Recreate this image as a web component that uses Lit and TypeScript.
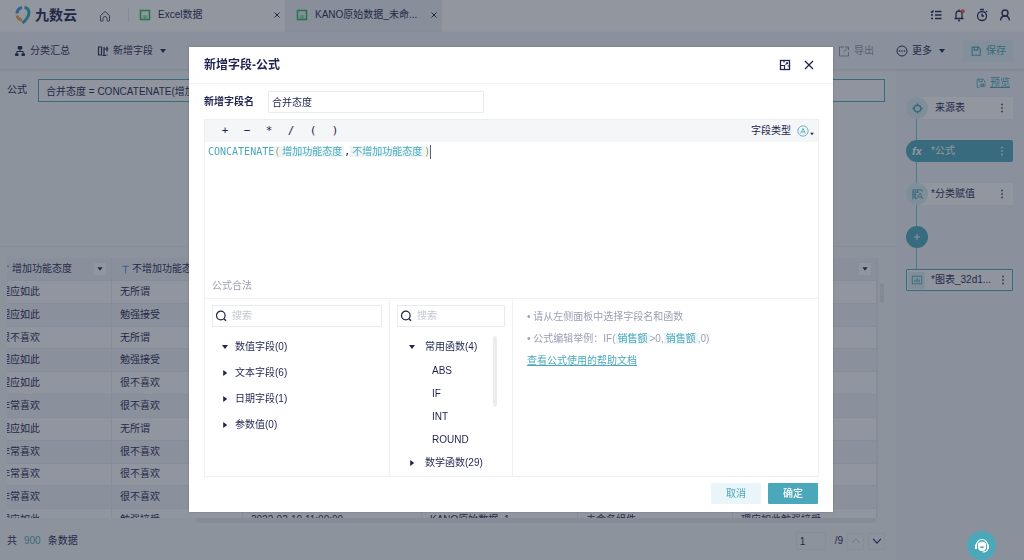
import { LitElement, html, css, svg, nothing } from "lit";
import { customElement, property, state } from "lit/decorators.js";
import { classMap } from "lit/directives/class-map.js";

const icons: Record<string, unknown> = {
  home: svg`<path d="M2.500 6.500 7 2.500l4.500 4v5.500H9V9.500a2 2 0 0 0-4 0V12H2.500z"/>`,
  sheet: svg`<rect x="2.500" y="2.500" width="9" height="9" stroke-width="1.600" stroke="#2fbf5b"/><path d="M4.500 8h5M4.500 9.800h5M7 7v4" stroke="#2fbf5b" stroke-width=".6"/>`,
  close: svg`<path d="m4.500 4.500 5 5m0-5-5 5"/>`,
  list: svg`<path d="m2 3.500 1 1 1.500-2M2 7h2M2 10.500h2M6 3.500h6.500M6 7h6.500M6 10.500h6.500" stroke-width="1.400"/>`,
  bell: svg`<path d="M2.500 10.500h9M4 10.500V6a3 3 0 0 1 6 0v4.500M6 12.500h2M7 1.500V3" stroke-width="1.300"/><circle cx="10.800" cy="3.200" r="2" fill="#f2564b" stroke="none"/>`,
  clock: svg`<circle cx="7" cy="8" r="4.500" stroke-width="1.300"/><path d="M5 1.500h4M7 5.500V8h2M11 3l1 1" stroke-width="1.300"/>`,
  user: svg`<circle cx="7" cy="5" r="3" stroke-width="1.400"/><path d="M2.500 12.500c.2-3 2-4.500 4.500-4.500s4.300 1.500 4.500 4.500" stroke-width="1.400"/>`,
  tree: svg`<path d="M5.200 2.500h3.600v2.500H5.200zM2.500 9.800h2.600v1.700H2.500zM8.900 9.800h2.600v1.700H8.900z" fill="currentColor"/><path d="M7 5v2.500M3.800 9.500v-2h6.400v2"/>`,
  addField: svg`<path d="M2.500 3h3v8h-3zM8 11.500V3M6.500 11.500H10M11 2.500v5M8.500 5h4M11 10.500v1" stroke-width="1.200"/>`,
  export: svg`<path d="M7 3H2.500v9h9V8M8 3h3.500v3M11 3.500 6.500 8"/>`,
  more: svg`<circle cx="7" cy="7" r="5"/><path d="M4 7h1.200M6.400 7h1.200M8.800 7H10" stroke-width="1.300"/>`,
  save: svg`<path d="M2.500 2.500h7.500l2 2v7.500h-9.500zM5 2.500v3.500h4V2.500" stroke-width="1.300"/>`,
  preview: svg`<path d="M5.500 12h-3V2.500H9l2.500 2V7M5 2.500v3h3.500v-3"/><path d="M5.500 9.700C7 7.500 11 7.500 12.700 9.700 11 12 7 12 5.500 9.700z"/><circle cx="9.100" cy="9.700" r=".9" fill="currentColor"/>`,
  target: svg`<circle cx="7" cy="7" r="3.600" stroke-width="1.600"/><path d="M7 1.500v2.500M7 10v2.500M1.500 7H4M10 7h2.500" stroke-width="1.600"/>`,
  assign: svg`<path d="M2 12V2h10v2M2 4.500h7M2 7h4M2 9.500h3M4.500 2v10M7 2v3M5.500 12l4.500-6.500 2.500 6.500M8 9.800h3.500"/>`,
  chart: svg`<rect x="1.500" y="2.500" width="11" height="9"/><path d="M4.500 9.500V7M7 9.500V5M9.500 9.500V6.500" stroke-width="1.300"/>`,
  plus: svg`<path d="M7 4v6M4 7h6"/>`,
  dots: svg`<path d="M7 2.800v1.400M7 6.300v1.400M7 9.800v1.400" stroke-width="1.500"/>`,
  expand: svg`<rect x="2.500" y="2.500" width="9" height="9" stroke-width="1.300"/><path d="M8.200 4.800h1.300v1.300M9.300 5 7.500 6.600M2.500 7.500H6.500V11.500M6 2.500v2M11.500 8h-2" stroke-width="1.200"/>`,
  bigClose: svg`<path d="m3 3 8 8m0-8-8 8" stroke-width="1.300"/>`,
  search: svg`<circle cx="6.800" cy="6.500" r="4.300" stroke-width="1.200"/><path d="m10 9.800 2 2" stroke-width="1.400"/>`,
  caretDown: svg`<path d="M4 5h6L7 9z" fill="currentColor" stroke="none"/>`,
  caretRight: svg`<path d="M5.200 4v6L9.200 7z" fill="currentColor" stroke="none"/>`,
  up: svg`<path d="m2.500 9.500 4.500-5 4.500 5"/>`,
  down: svg`<path d="m2.500 4.500 4.500 5 4.500-5" stroke-width="1.300"/>`,
  text: svg`<path d="M3 3h8.500M7.200 3v9" stroke="#5b8de0" stroke-width="1.300"/>`,
  typeText: svg`<circle cx="7" cy="7" r="6"/><path d="M4.300 10 7 3.800 9.700 10M5.200 8h3.600"/>`,
};

const icon = (name: string, size = 14) => html`
  <svg width=${size} height=${size} viewBox="0 0 14 14" fill="none" stroke="currentColor" stroke-width="1" aria-hidden="true">${icons[name]}</svg>
`;

const shared = css`
  * { box-sizing: border-box; }
  svg { display: block; flex: none; }
  button {
    display: inline-flex;
    align-items: center;
    justify-content: center;
    padding: 0;
    border: 0;
    background: none;
    color: inherit;
    font: inherit;
    cursor: pointer;
  }
  input { font: inherit; color: inherit; min-width: 0; border-radius: 0; outline: 0; }
`;

@customElement("top-bar")
class TopBar extends LitElement {
  static styles = [shared, css`
    :host { display: flex; align-items: stretch; height: 32px; background: #fff; }
    .brand { display: flex; align-items: center; gap: 3px; padding: 0 0 2px 14px; font-size: 14px; font-weight: 700; }
    .home { width: 22px; margin: 0 12px 0 17px; padding-bottom: 1px; color: #4b5270; }
    .tabs { display: flex; flex: 1; margin: 0; padding: 0; list-style: none; }
    .tab { display: flex; align-items: center; gap: 6px; width: 157px; padding: 0 1px 2px 10px; }
    .tab.first::before { content: ""; width: 1px; height: 14px; margin: 0 3px 0 -10px; background: #e6e9ee; }
    .tab.active { background: #edf0f4; }
    .name { flex: 1; white-space: nowrap; }
    .actions { display: flex; align-items: center; gap: 9px; padding: 0 12px 2px 0; }
  `];

  render() {
    return html`
      <div class="brand">
        <svg width="18" height="22" viewBox="0 0 18 22" fill="none" stroke-width="3">
          <path d="M3 9.500a6.500 6.500 0 0 1 5-6" stroke="#4a90d9"/>
          <path d="M3 11.500a5.500 5.500 0 0 0 5 4.500" stroke="#f2a33a"/>
          <path d="M10.500 3.200c4 .8 5 4.300 4.200 7.300-.8 3.300-3.200 6-6.200 8.500" stroke="#31a8c0"/>
        </svg>
        <span>九数云</span>
      </div>
      <button class="home" aria-label="首页">${icon("home")}</button>
      <ul class="tabs">
        <li class="tab first">${icon("sheet")}<span class="name">Excel数据</span><button aria-label="关闭">${icon("close")}</button></li>
        <li class="tab active">${icon("sheet")}<span class="name">KANO原始数据_未命...</span><button aria-label="关闭">${icon("close")}</button></li>
      </ul>
      <div class="actions">
        <button aria-label="任务">${icon("list")}</button>
        <button aria-label="通知">${icon("bell")}</button>
        <button aria-label="定时">${icon("clock")}</button>
        <button aria-label="账户">${icon("user")}</button>
      </div>
    `;
  }
}

@customElement("tool-bar")
class ToolBar extends LitElement {
  static styles = [shared, css`
    :host {
      display: flex;
      align-items: center;
      height: 37px;
      padding: 0 11px 0 13px;
      background: #f3f5f8;
      box-shadow: 0 1px 3px rgba(20, 32, 60, .12);
      position: relative;
    }
    .tool { gap: 3px; margin-right: 26px; }
    .end { margin: 0 14px 0 21px; }
    .right { display: flex; align-items: center; margin-left: auto; }
    .off { color: #8d93a5; margin: 0; }
    .save { gap: 4px; width: 50px; height: 22px; background: #e3f0f4; color: #4ba8bb; }
  `];

  render() {
    return html`
      <button class="tool">${icon("tree")}<span>分类汇总</span></button>
      <button class="tool">${icon("addField")}<span>新增字段</span>${icon("caretDown")}</button>
      <div class="right">
        <button class="tool off">${icon("export")}<span>导出</span></button>
        <button class="tool end">${icon("more")}<span>更多</span>${icon("caretDown")}</button>
        <button class="save">${icon("save", 12)}<span>保存</span></button>
      </div>
    `;
  }
}

const answers = [
  ["理应如此", "无所谓"],
  ["理应如此", "勉强接受"],
  ["很不喜欢", "无所谓"],
  ["理应如此", "勉强接受"],
  ["理应如此", "很不喜欢"],
  ["非常喜欢", "很不喜欢"],
  ["理应如此", "无所谓"],
  ["非常喜欢", "很不喜欢"],
  ["非常喜欢", "很不喜欢"],
  ["非常喜欢", "很不喜欢"],
  ["理应如此", "勉强接受", "2022-02-10 11:00:00", "KANO原始数据_1", "未命名组件", "理应如此勉强接受"],
];

@customElement("data-sheet")
class DataSheet extends LitElement {
  static styles = [shared, css`
    :host { display: flex; flex-direction: column; min-height: 0; flex: 1; background: #f7f8fa; }
    .formula { display: flex; gap: 11px; height: 178px; padding: 10px 11px 0 7px; align-items: flex-start; border-bottom: 1px solid #eceef2; }
    .formula label { line-height: 22px; }
    .formula input { flex: 1; height: 23px; padding: 0 7px; border: 1px solid #4ba8bb; background: #fafbfc; }
    .sheet { display: flex; align-items: flex-start; margin: 11px 0 0 7px; flex: 1; min-height: 0; }
    .view { flex: 1; height: 100%; overflow: hidden; border-right: 1px solid #e6e9ee; }
    table { width: calc(100% + 15px); height: 274px; margin-left: -15px; border-collapse: separate; border-spacing: 0; table-layout: fixed; }
    th, td { padding: 0 8px; border-right: 1px solid #e8ebf0; border-bottom: 1px solid #e8ebf0; text-align: left; font-weight: 400; white-space: nowrap; line-height: 14px; }
    th { height: 23px; background: #eff3f7; }
    tbody tr:nth-child(odd) td { background: #fdfdfe; }
    tbody tr:nth-child(even) td { background: #f3f5f8; }
    .head { display: flex; align-items: center; gap: 1px; }
    .head span { flex: 1; }
    .head button { width: 12px; height: 12px; margin-right: -3px; background: #fff; }
    .c1 { width: 120px; } .c2 { width: 131px; } .c3 { width: 179px; } .c4 { width: 156px; } .c5 { width: 155px; }
    .thumb { width: 4px; height: 20px; margin: 25px 12px 0 2px; border-radius: 2px; background: #e2e5ea; }
    .track { height: 5px; margin: 0 20px 0 196px; border-radius: 2px; background: #e6e9ee; }
    .foot { display: flex; align-items: center; height: 37px; padding: 0 11px 1px 7px; }
    .count { margin: 0 7px; color: #4ba8bb; }
    .foot form { display: flex; align-items: center; gap: 4px; margin-left: auto; }
    .foot input { width: 30px; height: 18px; margin-right: 5px; padding: 0 3px; border: 1px solid #eceef2; background: none; }
    .foot button { width: 17px; height: 17px; border: 1px solid #eceef2; }
    .foot button[disabled] { color: #b8bdca; }
  `];

  render() {
    const heads = ["增加功能态度", "不增加功能态度", "", "", "", ""];
    return html`
      <div class="formula">
        <label for="expr">公式</label>
        <input id="expr" readonly .value=${"合并态度 = CONCATENATE(增加功能态度,不增加功能态度)"}>
      </div>
      <div class="sheet">
        <div class="view">
          <table>
            <colgroup><col class="c1"><col class="c2"><col class="c3"><col class="c4"><col class="c5"><col></colgroup>
            <thead><tr>${heads.map((h) => html`
              <th><div class="head">${icon("text", 11)}<span>${h}</span><button aria-label="筛选">${icon("caretDown", 12)}</button></div></th>`)}
            </tr></thead>
            <tbody>${answers.map((row) => html`<tr>${heads.map((_, i) => html`<td>${row[i] ?? nothing}</td>`)}</tr>`)}</tbody>
          </table>
        </div>
        <div class="thumb"></div>
      </div>
      <div class="track"></div>
      <div class="foot">
        <span>共</span><span class="count">900</span><span>条数据</span>
        <form>
          <input aria-label="页码" .value=${"1"}><span>/9</span>
          <button type="button" disabled aria-label="上一页">${icon("up", 12)}</button>
          <button type="button" aria-label="下一页">${icon("down", 12)}</button>
        </form>
      </div>
    `;
  }
}

@customElement("flow-panel")
class FlowPanel extends LitElement {
  static styles = [shared, css`
    :host { display: block; width: 128px; padding: 6px 11px 0 10px; background: #f2f4f8; }
    .preview { display: flex; justify-content: flex-end; align-items: center; gap: 3px; padding-right: 3px; height: 16px; color: #4ba8bb; }
    ol { display: grid; gap: 21px; margin: 6px 0 0; padding: 0; list-style: none; }
    li { display: flex; align-items: center; height: 22px; position: relative; background: #fff; border-radius: 11px 0 0 11px; }
    li + li::before { content: ""; position: absolute; left: 10px; top: -21px; width: 1px; height: 21px; background: #7fc4d1; }
    .badge { display: grid; place-items: center; width: 22px; height: 22px; border-radius: 11px; background: #dbeef2; color: #4ba8bb; }
    .mark { width: 4px; margin-left: 3px; }
    .name { flex: 1; white-space: nowrap; }
    .active { background: #4ba8bb; color: #fff; border-radius: 11px 2px 2px 11px; }
    .active .badge { background: none; color: #fff; }
    .fx { font: italic 700 11px "Liberation Sans", sans-serif; }
    .add { background: none; }
    .add .badge { background: #4ba8bb; color: #fff; }
    .chart { border: 1px solid #4ba8bb; border-radius: 1px; background: #fafbfc; }
    .chart .badge { width: 17px; height: 17px; margin: 0 3px 0 1px; border-radius: 0; }
    .chart::before { margin: -1px 0 0 -1px; }
    .dots { width: 14px; margin-right: 4px; }
    .chart .dots { margin-right: 2px; }
  `];

  render() {
    const nodes = [
      { name: "来源表", icon: "target", kind: "" },
      { name: "公式", icon: "fx", kind: "active", mark: true },
      { name: "分类赋值", icon: "assign", kind: "", mark: true },
      { name: "", icon: "plus", kind: "add" },
      { name: "图表_32d1...", icon: "chart", kind: "chart", mark: true },
    ];
    return html`
      <a class="preview" href="#preview">${icon("preview", 12)}<span>预览</span></a>
      <ol>${nodes.map((n) => n.kind === "add"
        ? html`<li class="add"><button class="badge" aria-label="添加步骤">${icon("plus")}</button></li>`
        : html`<li class=${n.kind}>
            <span class="badge">${n.icon === "fx" ? html`<i class="fx">fx</i>` : icon(n.icon, n.kind === "chart" ? 12 : 13)}</span>
            <span class="mark">${n.mark ? "*" : ""}</span><span class="name">${n.name}</span>
            <button class="dots" aria-label="操作">${icon("dots", 14)}</button>
          </li>`)}
      </ol>
    `;
  }
}

@customElement("formula-dialog")
class FormulaDialog extends LitElement {
  @property() heading = "";
  @state() private fieldName = "合并态度";

  static styles = [shared, css`
    :host { display: flex; flex-direction: column; background: #fff; box-shadow: 0 0 2px rgba(0, 0, 0, .2); }
    header { display: flex; align-items: center; gap: 10px; height: 37px; padding: 0 17px 0 15px; border-bottom: 1px solid #f0f1f4; }
    h1 { flex: 1; margin: 0; font-size: 12px; font-weight: 700; }
    .bar-btn { width: 14px; height: 14px; }
    .field { display: flex; align-items: center; gap: 14px; height: 35px; padding: 0 15px; }
    .field label { font-weight: 700; }
    .field input { width: 216px; height: 22px; padding: 0 3px; border: 1px solid #e9ebef; }
    .editor { display: flex; flex-direction: column; flex: 1; min-height: 0; margin: 0 14px 0 15px; border: 1px solid #eceef2; }
    .ops { display: flex; align-items: center; height: 22px; padding: 0 2px 0 9px; background: #f5f6f8; }
    .op { width: 22px; height: 22px; font-family: "DejaVu Sans Mono", monospace; font-size: 11px; }
    .type { gap: 6px; margin-left: auto; }
    .type .a { color: #4ba8bb; }
    .type .caret { align-self: flex-end; margin-left: -7px; }
    .code { flex: 1; padding: 2px 3px 0; font-family: "DejaVu Sans Mono", "Noto Sans CJK SC", monospace; line-height: 16px; outline: 0; white-space: nowrap; }
    .fn, .chip { color: #4ba8bb; }
    .chip { padding: 0 2px; background: #ecf6f8; }
    .paren { color: #a3a26f; background: #eff7f4; }
    .cursor { display: inline-block; width: 1px; height: 14px; vertical-align: middle; background: #5b5f78; }
    .status { height: 26px; padding-left: 7px; color: #9a9eb4; line-height: 27px; }
    .panes { display: grid; grid-template-columns: 185px 123px 1fr; height: 178px; border-top: 1px solid #f0f1f4; }
    .pane { min-width: 0; overflow: hidden; padding: 6px 7px 0; border-right: 1px solid #f0f1f4; }
    .pane:last-child { border-right: 0; }
    .search { display: flex; align-items: center; gap: 4px; height: 22px; padding-left: 1px; border: 1px solid #e9ebef; }
    .search input { flex: 1; padding: 0; border: 0; background: none; }
    .search input::placeholder { color: #c4c7d3; opacity: 1; }
    ul { margin: 0; padding: 0; list-style: none; }
    .fields { padding-top: 7px; }
    .node { gap: 3px; height: 26px; padding-left: 6px; }
    .tree { position: relative; padding-top: 8px; }
    .tree .node { height: 24px; gap: 6px; padding-left: 8px; }
    .leaf { display: flex; height: 23px; padding-left: 35px; }
    .thumb { position: absolute; top: 9px; right: 8px; width: 4px; height: 71px; border-radius: 2px; background: #ececee; }
    .help { padding: 7px 14px 0; color: #9a9eb4; line-height: 22px; }
    .help p { margin: 0; }
    .help a { color: #4ba8bb; }
    footer { display: flex; justify-content: flex-end; gap: 7px; padding: 6px 15px 8px; }
    .btn { width: 50px; height: 21px; border-radius: 1px; background: #e9f5f8; color: #4ba8bb; }
    .btn.primary { background: #4ba8bb; color: #fff; font-weight: 500; }
  `];

  private onName(e: Event) {
    this.fieldName = (e.target as HTMLInputElement).value;
  }

  private node(label: string, open = false) {
    return html`<li><button class="node" aria-expanded=${open}>${icon(open ? "caretDown" : "caretRight", 14)}<span>${label}</span></button></li>`;
  }

  render() {
    return html`
      <header>
        <h1>${this.heading}</h1>
        <button class="bar-btn" aria-label="展开">${icon("expand")}</button>
        <button class="bar-btn" aria-label="关闭">${icon("bigClose")}</button>
      </header>
      <div class="field">
        <label for="name">新增字段名</label>
        <input id="name" .value=${this.fieldName} @input=${this.onName}>
      </div>
      <section class="editor">
        <div class="ops">
          ${["+", "−", "*", "/", "(", ")"].map((o) => html`<button class="op">${o}</button>`)}
          <button class="type"><span>字段类型</span><span class="a">${icon("typeText", 12)}</span><span class="caret">${icon("caretDown", 8)}</span></button>
        </div>
        <div class="code" role="textbox" aria-label="公式" tabindex="0"><span class="fn">CONCATENATE</span><span class="paren">(</span><span class="chip">增加功能态度</span>,<span class="chip">不增加功能态度</span><span class="paren">)</span><span class="cursor"></span></div>
        <div class="status">公式合法</div>
        <div class="panes">
          <div class="pane">
            <label class="search">${icon("search")}<input placeholder="搜索" aria-label="搜索字段"></label>
            <ul class="fields">
              ${this.node("数值字段(0)", true)}${this.node("文本字段(6)")}${this.node("日期字段(1)")}${this.node("参数值(0)")}
            </ul>
          </div>
          <div class="pane">
            <label class="search">${icon("search")}<input placeholder="搜索" aria-label="搜索函数"></label>
            <ul class="tree">
              ${this.node("常用函数(4)", true)}
              ${["ABS", "IF", "INT", "ROUND"].map((f) => html`<li><button class="leaf">${f}</button></li>`)}
              ${this.node("数学函数(29)")}
              <li class="thumb" role="presentation"></li>
            </ul>
          </div>
          <div class="pane help">
            <p>• 请从左侧面板中选择字段名和函数</p>
            <p>• 公式编辑举例：IF(<span class="chip">销售额</span>&gt;0,<span class="chip">销售额</span>,0)</p>
            <p><a href="#help">查看公式使用的帮助文档</a></p>
          </div>
        </div>
      </section>
      <footer>
        <button class="btn">取消</button>
        <button class=${classMap({ btn: true, primary: true })}>确定</button>
      </footer>
    `;
  }
}

@customElement("app-root")
class AppRoot extends LitElement {
  static styles = [shared, css`
    :host {
      display: flex;
      flex-direction: column;
      height: 100vh;
      overflow: hidden;
      background: #f7f8fa;
      color: #1f2450;
      font: 10px/14px "Liberation Sans", "Noto Sans CJK SC", sans-serif;
    }
    main { display: flex; flex: 1; min-height: 0; }
    .mask { position: fixed; inset: 0; display: grid; padding: 47px 191px 48px 189px; background: rgba(35, 46, 64, .5); }
    .service { position: fixed; right: 28px; bottom: 0; width: 29px; height: 29px; border-radius: 15px; background: #4ba8bb; color: #fff; }
  `];

  render() {
    return html`
      <top-bar></top-bar>
      <tool-bar></tool-bar>
      <main>
        <data-sheet></data-sheet>
        <flow-panel></flow-panel>
      </main>
      <div class="mask">
        <formula-dialog role="dialog" aria-modal="true" aria-label="新增字段-公式" .heading=${"新增字段-公式"}></formula-dialog>
      </div>
      <button class="service" aria-label="客服">
        <svg width="16" height="16" viewBox="0 0 16 16" fill="none" stroke="currentColor">
          <path d="M2.500 8V7a5.500 5.500 0 0 1 11 0v1" stroke-width="1.200"/>
          <path d="M1 6.500h2v4.500H1zM13 6.500h2v4.500h-2z" fill="currentColor" stroke="none"/>
          <path d="M4 5.500C5 3 11 3 12 5.500V9a4 4 0 0 1-8 0z" fill="currentColor" stroke="none"/>
          <path d="M5.500 8.500c1 2.300 4 2.300 5 0z" fill="#4ba8bb" stroke="none"/>
          <path d="M13.800 11c-.8 2-2.300 3-5.300 3" stroke-width="1.200"/>
        </svg>
      </button>
    `;
  }
}
